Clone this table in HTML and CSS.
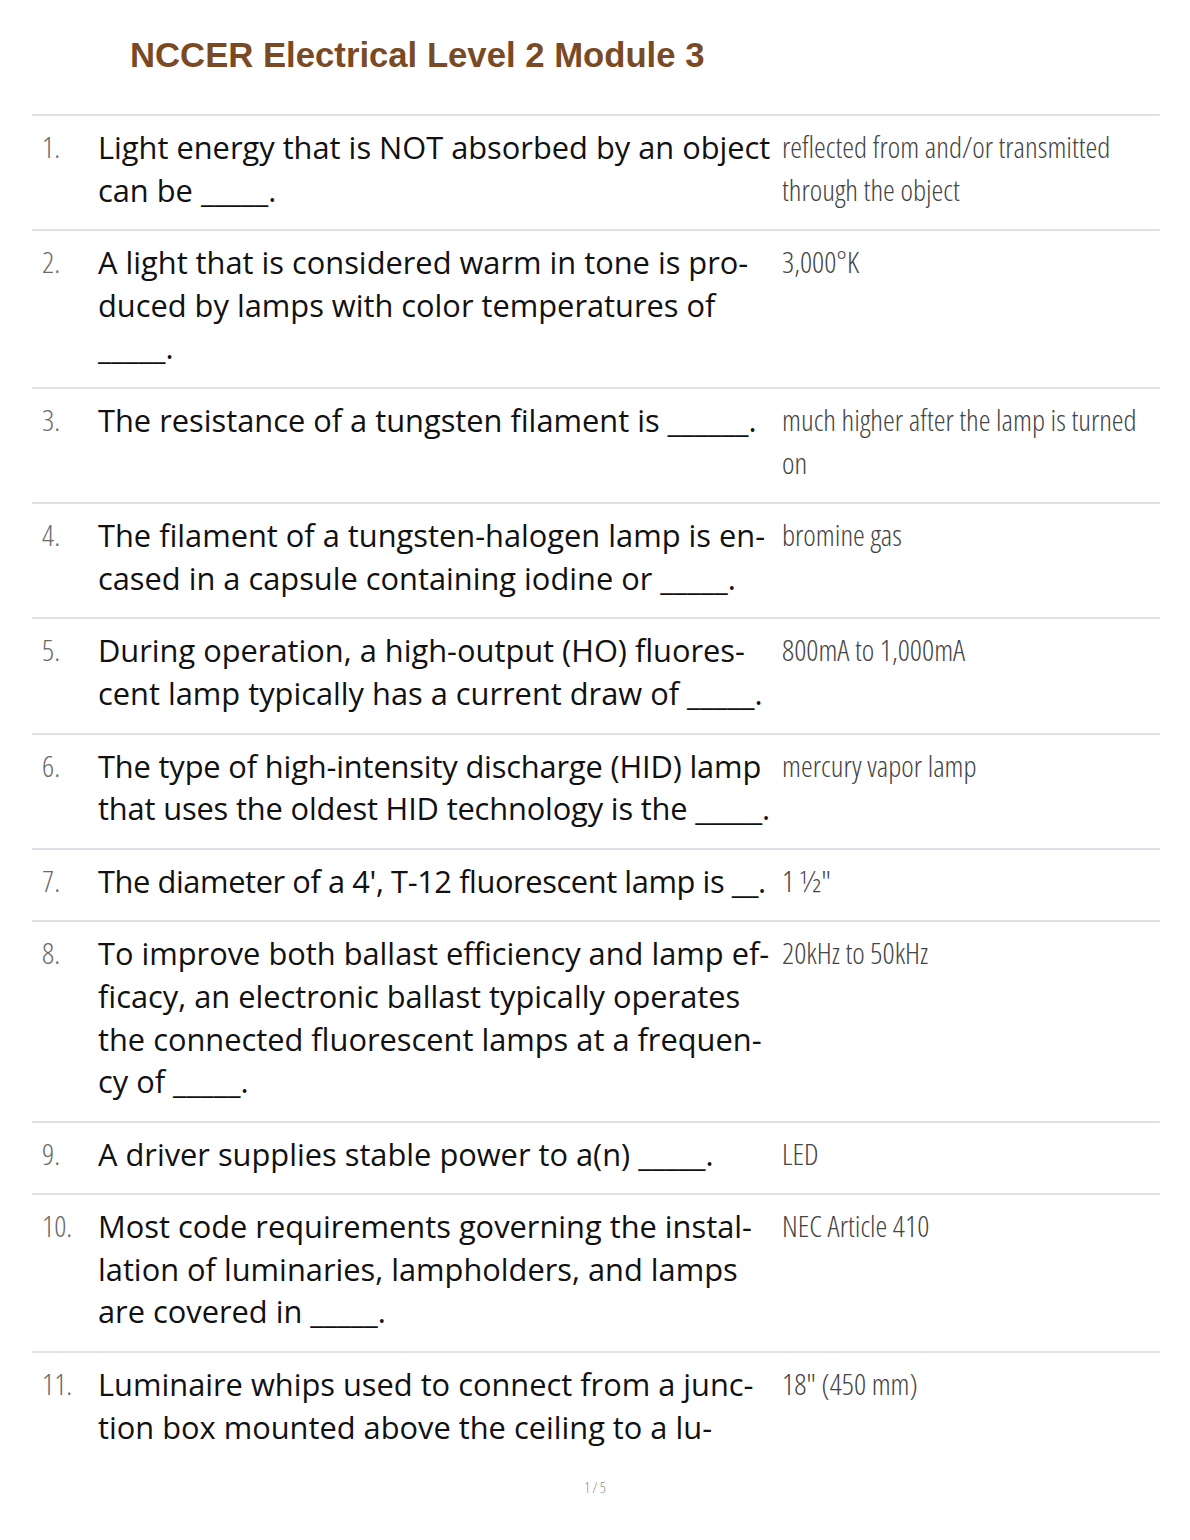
FILE: index.html
```html
<!DOCTYPE html>
<html>
<head>
<meta charset="utf-8">
<link rel="stylesheet" href="styles.css">
</head>
<body>
<h1 class="title">NCCER Electrical Level 2 Module 3</h1>
<div class="list">
  <div class="row">
    <div class="num">1.</div>
    <div class="q">Light energy that is NOT absorbed by an object<br>can be _____.</div>
    <div class="a">reflected from and/or transmitted<br>through the object</div>
  </div>
  <div class="row">
    <div class="num">2.</div>
    <div class="q">A light that is considered warm in tone is pro-<br>duced by lamps with color temperatures of<br>_____.</div>
    <div class="a">3,000°K</div>
  </div>
  <div class="row">
    <div class="num">3.</div>
    <div class="q">The resistance of a tungsten filament is ______.</div>
    <div class="a">much higher after the lamp is turned<br>on</div>
  </div>
  <div class="row">
    <div class="num">4.</div>
    <div class="q">The filament of a tungsten-halogen lamp is en-<br>cased in a capsule containing iodine or _____.</div>
    <div class="a">bromine gas</div>
  </div>
  <div class="row">
    <div class="num">5.</div>
    <div class="q">During operation, a high-output (HO) fluores-<br>cent lamp typically has a current draw of _____.</div>
    <div class="a">800mA to 1,000mA</div>
  </div>
  <div class="row">
    <div class="num">6.</div>
    <div class="q tight">The type of high-intensity discharge (HID) lamp<br>that uses the oldest HID technology is the _____.</div>
    <div class="a">mercury vapor lamp</div>
  </div>
  <div class="row">
    <div class="num">7.</div>
    <div class="q tighter">The diameter of a 4', T-12 fluorescent lamp is __.</div>
    <div class="a">1 ½"</div>
  </div>
  <div class="row">
    <div class="num">8.</div>
    <div class="q">To improve both ballast efficiency and lamp ef-<br>ficacy, an electronic ballast typically operates<br>the connected fluorescent lamps at a frequen-<br>cy of _____.</div>
    <div class="a">20kHz to 50kHz</div>
  </div>
  <div class="row">
    <div class="num">9.</div>
    <div class="q">A driver supplies stable power to a(n) _____.</div>
    <div class="a">LED</div>
  </div>
  <div class="row">
    <div class="num">10.</div>
    <div class="q">Most code requirements governing the instal-<br>lation of luminaries, lampholders, and lamps<br>are covered in _____.</div>
    <div class="a">NEC Article 410</div>
  </div>
  <div class="row last">
    <div class="num">11.</div>
    <div class="q">Luminaire whips used to connect from a junc-<br>tion box mounted above the ceiling to a lu-</div>
    <div class="a">18" (450 mm)</div>
  </div>
</div>
<div class="footer">1 / 5</div>
</body>
</html>
```

FILE: styles.css
```css
html, body {
  margin: 0;
  padding: 0;
  background: #ffffff;
}

.title {
  margin: 0;
  padding: 36px 0 0 130px;
  height: 78px;
  box-sizing: border-box;
  font-family: "Liberation Sans", Arial, sans-serif;
  font-weight: bold;
  font-size: 34.7px;
  line-height: 38px;
  color: #7a4a24;
}

.list {
  margin: 36px 30px 0 32px;
}

.row {
  display: grid;
  grid-template-columns: 66px 684px 1fr;
  border-top: 2px solid #e0e0e6;
  padding: 10px 0 18px 0;
  line-height: 42.6px;
}

.num {
  padding-left: 10px;
  font-family: "Open Sans", sans-serif;
  font-stretch: 75%;
  font-weight: 300;
  font-size: 29.8px;
  color: #6a6a6a;
}

.q {
  font-family: "Open Sans", sans-serif;
  font-size: 30.8px;
  color: #111111;
  white-space: nowrap;
}

.q.tight {
  letter-spacing: -0.15px;
}

.q.tighter {
  letter-spacing: -0.4px;
}

.a {
  font-family: "Open Sans", sans-serif;
  font-stretch: 75%;
  font-weight: 300;
  font-size: 29.8px;
  color: #444444;
  white-space: nowrap;
}

.footer {
  margin-top: 12px;
  text-align: center;
  font-family: "Open Sans", sans-serif;
  font-stretch: 75%;
  font-weight: 300;
  font-size: 14px;
  color: #888888;
}
```
